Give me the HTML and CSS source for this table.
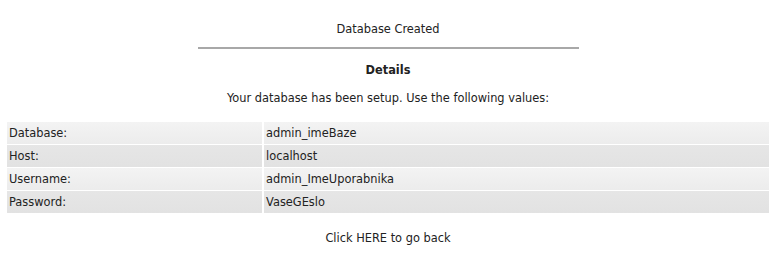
FILE: index.html
```html
<!DOCTYPE html>
<html lang="en">

<head>
  <meta charset="UTF-8">
  <meta name="viewport" content="width=device-width, initial-scale=1.0">
  <title>Database Created</title>
  <link rel="stylesheet" href="styles.css">
</head>

<body>
  <div class="title">Database Created</div>
  <hr>
  <h3>Details</h3>
  <p class="note">Your database has been setup. Use the following values:</p>
  <table>
    <tr class="odd">
      <td>Database:</td>
      <td>admin_imeBaze</td>
    </tr>
    <tr class="even">
      <td>Host:</td>
      <td>localhost</td>
    </tr>
    <tr class="odd">
      <td>Username:</td>
      <td>admin_ImeUporabnika</td>
    </tr>
    <tr class="even">
      <td>Password:</td>
      <td>VaseGEslo</td>
    </tr>
  </table>
  <p class="back"><a href="#">Click HERE</a> to go back</p>
</body>
</html>
```

FILE: styles.css
```css
* {
  margin: 0;
  padding: 0;
  box-sizing: border-box;
}
body {
  font-family: "DejaVu Sans", Verdana, sans-serif;
  font-size: 11.4px;
  color: #222;
  background: #fff;
  padding: 21px 7px 0;
}
.title {
  text-align: center;
  line-height: 16px;
}
hr {
  width: 50%;
  margin: 10px auto 0;
  border: none;
  border-top: 2px solid #a8a8a8;
}
h3 {
  text-align: center;
  font-size: 11.4px;
  margin-top: 13px;
  line-height: 16px;
}
.note {
  text-align: center;
  margin-top: 12px;
  line-height: 16px;
}
table {
  border-spacing: 2px 1px;
  margin: 15px 0 0 -2px;
  width: calc(100% + 4px);
}
td {
  height: 22px;
  padding: 0 2px;
}
td:first-child {
  width: 255px;
}
.odd td {
  background: linear-gradient(#f3f3f3, #ececec);
}
.even td {
  background: linear-gradient(#e6e6e6, #e2e2e2);
}
.back {
  text-align: center;
  margin-top: 16px;
  line-height: 16px;
}
.back a {
  color: inherit;
  text-decoration: none;
}
```
